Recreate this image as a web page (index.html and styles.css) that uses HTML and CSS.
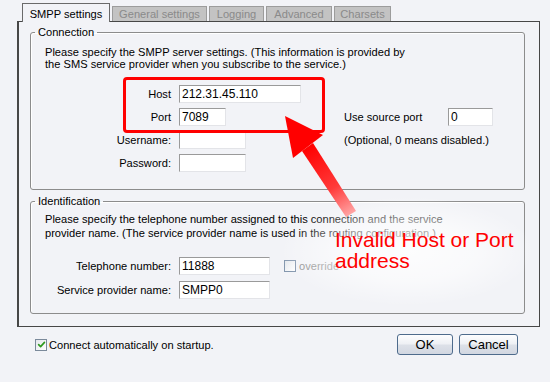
FILE: index.html
```html
<!DOCTYPE html>
<html lang="en">
<head>
  <meta charset="utf-8">
  <title>SMPP settings</title>
  <link rel="stylesheet" href="styles.css">
</head>
<body>
  <div class="dialog">
    <div class="tabs">
      <div class="tab tab-active tab-smpp">SMPP settings</div>
      <div class="tab tab-general">General settings</div>
      <div class="tab tab-logging">Logging</div>
      <div class="tab tab-advanced">Advanced</div>
      <div class="tab tab-charsets">Charsets</div>
    </div>

    <div class="panel">
      <fieldset class="group group-connection">
        <legend>Connection</legend>
        <p class="group-text group-text-tight">Please specify the SMPP server settings. (This information is provided by<br>the SMS service provider when you subscribe to the service.)</p>
        <div class="server-grid">
          <label class="field-label">Host</label>
          <input class="field field-host" type="text" value="212.31.45.110">
          <span></span><span></span>

          <label class="field-label">Port</label>
          <input class="field field-port" type="text" value="7089">
          <label class="side-label">Use source port</label>
          <input class="field field-source" type="text" value="0">

          <label class="field-label">Username:</label>
          <input class="field field-user" type="text" value="">
          <span class="side-note">(Optional, 0 means disabled.)</span>

          <label class="field-label">Password:</label>
          <input class="field field-user" type="password" value="">
        </div>
      </fieldset>

      <fieldset class="group group-identification">
        <legend>Identification</legend>
        <p class="group-text">Please specify the telephone number assigned to this connection and the service<br>provider name. (The service provider name is used in the routing configuration.)</p>
        <div class="ident-grid">
          <label class="field-label">Telephone number:</label>
          <input class="field field-ident" type="text" value="11888">
          <span class="checkline checkline-override"><span class="checkbox"></span><span class="muted">override</span></span>

          <label class="field-label">Service provider name:</label>
          <input class="field field-ident" type="text" value="SMPP0">
        </div>
      </fieldset>
    </div>

    <div class="footer">
      <span class="checkline">
        <span class="checkbox checkbox-on">
          <svg viewBox="0 0 10 10" aria-hidden="true"><path d="M1.8 5.2 4 7.4 8.3 2.6"/></svg>
        </span>
        Connect automatically on startup.
      </span>
      <div class="buttons">
        <button class="button button-ok">OK</button>
        <button class="button button-cancel">Cancel</button>
      </div>
    </div>

    <div class="glow"></div>
    <div class="highlight"></div>
    <svg class="arrow" viewBox="0 0 550 382" aria-hidden="true">
      <defs>
        <linearGradient id="shaft" gradientUnits="userSpaceOnUse" x1="308" y1="146" x2="350" y2="216">
          <stop offset="0" stop-color="#ff0000"/>
          <stop offset="0.6" stop-color="#ff3a3a"/>
          <stop offset="1" stop-color="#ffa8a8"/>
        </linearGradient>
      </defs>
      <polygon points="302,151 313,143 356,211 346,217" fill="url(#shaft)"/>
      <polygon points="285,116 323,135 293,158" fill="#ff0000"/>
    </svg>
    <div class="note">Invalid Host or Port<br>address</div>
  </div>
</body>
</html>
```

FILE: styles.css
```css
*, *::before, *::after {
  box-sizing: border-box;
}

html, body {
  margin: 0;
  width: 550px;
  height: 382px;
  overflow: hidden;
}

body {
  background-color: #F2F3F7;
  color: #000000;
  font-family: "Liberation Sans", Arial, sans-serif;
  font-size: 11.1px;
}

.dialog {
  position: relative;
  height: 382px;
  padding-top: 3px;
}

/* tabs */

.tabs {
  display: flex;
  align-items: flex-end;
  gap: 2px;
  height: 18px;
  margin-left: 22px;
  position: relative;
  z-index: 1;
}

.tab {
  height: 15px;
  padding-top: 1px;
  line-height: 13px;
  text-align: center;
  background-color: #C3C3C3;
  border: 1px solid #9C9C9C;
  border-bottom: none;
  color: #8A8A8A;
}

.tab-active {
  height: 19px;
  margin-bottom: -1px;
  padding-top: 4px;
  background-color: #F2F3F7;
  border-color: #6A6A6A;
  color: #000000;
}

.tab-smpp { width: 88px; }
.tab-general { width: 95px; }
.tab-logging { width: 55px; }
.tab-advanced { width: 66px; }
.tab-charsets { width: 57px; }

/* panel */

.panel {
  width: 523px;
  height: 306px;
  margin-left: 17px;
  padding: 3px 14px 12px 11px;
  border: 1px solid #474747;
  border-left-width: 2px;
}

.group {
  margin: 0;
  padding: 0 8px 0 4px;
  min-width: 0;
  border: 1px solid #8C8C8C;
  border-radius: 3px;
  box-shadow: inset 1px 1px 0 #FFFFFF;
}

.group legend {
  padding: 0 3px;
  line-height: 14px;
}

.group-connection {
  height: 165px;
}

.group-identification {
  height: 120px;
  margin-top: 4px;
}

.group-text {
  margin: 4px 0 0 10px;
  line-height: 14px;
}

.group-text-tight {
  margin-top: 7px;
  line-height: 12px;
}

.server-grid {
  display: grid;
  grid-template-columns: 144px 165px 104px 45px;
  grid-auto-rows: 18px;
  row-gap: 5px;
  align-items: center;
  margin-top: 15px;
}

.ident-grid {
  display: grid;
  grid-template-columns: 144px 91px auto;
  grid-auto-rows: 18px;
  row-gap: 6px;
  align-items: center;
  margin-top: 17px;
}

.field-label {
  padding-right: 8px;
  text-align: right;
}

.side-label {
  white-space: nowrap;
}

.side-note {
  grid-column: 3 / 5;
  white-space: nowrap;
}

.field {
  height: 18px;
  margin: 0;
  padding: 0 2px;
  border: 1px solid;
  border-color: #9A9A9A #E3E4E8 #E3E4E8 #9A9A9A;
  background-color: #FFFFFF;
  font: inherit;
  font-size: 12px;
  color: #000000;
  outline: none;
}

.field-host { width: 122px; }
.field-port { width: 47px; }
.field-user { width: 67px; }
.field-source { width: 45px; }
.field-ident { width: 91px; }

/* checkboxes */

.checkline {
  display: inline-flex;
  align-items: center;
  gap: 2px;
  white-space: nowrap;
}

.checkline-override {
  margin-left: 14px;
  gap: 3px;
}

.checkbox {
  display: inline-flex;
  align-items: center;
  justify-content: center;
  width: 12px;
  height: 12px;
  border: 1px solid #8497AE;
  background: linear-gradient(135deg, #E4E7EC, #FFFFFF);
}

.checkbox-on {
  border-color: #7B8A9B;
}

.checkbox svg {
  width: 9px;
  height: 9px;
  fill: none;
  stroke: #2E9A1E;
  stroke-width: 1.8;
  stroke-linecap: round;
  stroke-linejoin: round;
}

.muted {
  color: #8E8E8E;
}

/* footer */

.footer {
  display: flex;
  align-items: center;
  justify-content: space-between;
  height: 21px;
  margin-top: 7px;
  padding: 0 32px 0 35px;
}

.buttons {
  display: flex;
  gap: 6px;
}

.button {
  height: 21px;
  padding: 0;
  border: 1px solid #4E6B8C;
  border-radius: 3px;
  background: linear-gradient(#FDFDFE, #EEF0F4 48%, #DDE1E8 52%, #D2D7E1);
  font-family: inherit;
  font-size: 13px;
  color: #000000;
}

.button-ok { width: 56px; }
.button-cancel { width: 59px; }

/* annotation on top of the dialog */

.glow {
  position: absolute;
  left: 280px;
  top: 196px;
  width: 255px;
  height: 110px;
  background: radial-gradient(closest-side, rgba(255, 255, 255, 0.85), rgba(255, 255, 255, 0.55) 55%, rgba(255, 255, 255, 0));
}

.highlight {
  position: absolute;
  left: 123px;
  top: 77px;
  width: 202px;
  height: 56px;
  border: 3px solid #FF0000;
  border-radius: 4px;
}

.arrow {
  position: absolute;
  left: 0;
  top: 0;
  width: 550px;
  height: 382px;
  pointer-events: none;
}

.note {
  position: absolute;
  left: 335px;
  top: 229px;
  font-family: "Comic Sans MS", "Liberation Sans", sans-serif;
  font-size: 21px;
  line-height: 21px;
  color: #FF0000;
  white-space: nowrap;
}
```
